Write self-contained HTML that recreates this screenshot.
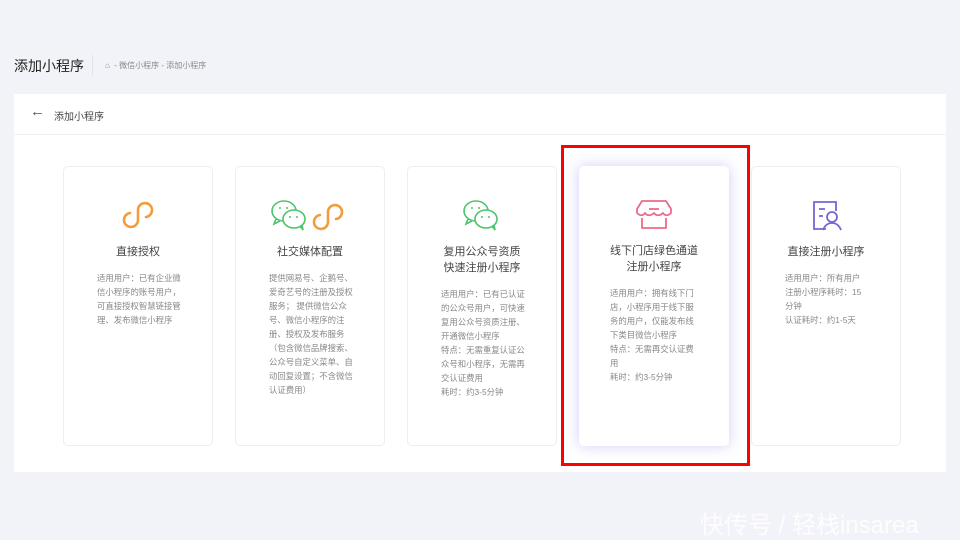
<!DOCTYPE html>
<html><head><meta charset="utf-8"><style>
*{margin:0;padding:0;box-sizing:border-box}
body{width:960px;height:540px;background:#f2f3f8;font-family:"Liberation Sans","Noto Sans CJK SC",sans-serif;position:relative;overflow:hidden;color:#333}
.t{position:absolute;left:14px;top:56px;font-size:14px;color:#222}
.sep{position:absolute;left:92px;top:55px;width:1px;height:20px;background:#e2e3e8}
.bc{position:absolute;left:105px;top:60px;font-size:8px;color:#888}
.panel{position:absolute;left:14px;top:94px;width:932px;height:378px;background:#fff}
.hd{height:41px;border-bottom:1px solid #f0f0f3;font-size:10px;color:#444;padding:14px 0 0 40px;position:relative}
.card{position:absolute;top:166px;width:150px;height:280px;background:#fff;border:1px solid #eeeef2;border-radius:5px}
.card .ic{position:absolute;top:32px;left:0;width:100%;text-align:center}
.card .tt{position:absolute;top:77px;left:0;width:100%;text-align:center;font-size:11px;line-height:16px;color:#444}
.card .ds{position:absolute;left:33px;white-space:nowrap;font-size:8.4px;line-height:14px;color:#888}
.sel{border:none;box-shadow:0 0 14px rgba(130,110,240,.35)}
.red{position:absolute;left:561px;top:145px;width:189px;height:321px;border:3px solid #f00}
.wm{position:absolute;left:700px;top:505px;font-size:24px;color:#fff;opacity:.9}
</style></head><body>
<div class="t">添加小程序</div><div class="sep"></div>
<div class="bc">⌂ &nbsp;- 微信小程序 - 添加小程序</div>
<div class="panel"><div class="hd"><span style="position:absolute;left:16px;top:9px;font-size:15px;color:#555">←</span>添加小程序</div></div>

<div class="card" style="left:63px"><div class="ic"><svg width="36" height="32" viewBox="0 0 36 32"><path d="M10 14a7 7 0 1 0 8 7V11a7 7 0 1 1 8 7" fill="none" stroke="#f39c3b" stroke-width="2.6" stroke-linecap="round"/></svg></div>
<div class="tt">直接授权</div>
<div class="ds" style="top:104px">适用用户：已有企业微<br>信小程序的账号用户，<br>可直接授权智慧链接管<br>理、发布微信小程序</div></div>

<div class="card" style="left:235px"><div class="ic"><svg width="100" height="34" viewBox="0 0 100 34"><g fill="none" stroke="#4cc46a" stroke-width="1.6"><ellipse cx="24" cy="12" rx="12" ry="10"/><path d="M16 20l-2 5 6-3"/><ellipse cx="34" cy="20" rx="11" ry="9" fill="#fff"/><path d="M40 27l3 4-1-5"/></g><g fill="#4cc46a"><circle cx="20" cy="9" r="1"/><circle cx="27" cy="9" r="1"/><circle cx="30" cy="18" r="1"/><circle cx="37" cy="18" r="1"/></g><path d="M60 16a7 7 0 1 0 8 7V13a7 7 0 1 1 8 7" fill="none" stroke="#f39c3b" stroke-width="2.6" stroke-linecap="round"/></svg></div>
<div class="tt">社交媒体配置</div>
<div class="ds" style="top:104px">提供网易号、企鹅号、<br>爱奇艺号的注册及授权<br>服务； 提供微信公众<br>号、微信小程序的注<br>册、授权及发布服务<br>（包含微信品牌搜索、<br>公众号自定义菜单、自<br>动回复设置；不含微信<br>认证费用）</div></div>

<div class="card" style="left:407px"><div class="ic"><svg width="50" height="34" viewBox="0 0 50 34"><g fill="none" stroke="#4cc46a" stroke-width="1.6"><ellipse cx="19" cy="12" rx="12" ry="10"/><path d="M11 20l-2 5 6-3"/><ellipse cx="29" cy="20" rx="11" ry="9" fill="#fff"/><path d="M35 27l3 4-1-5"/></g><g fill="#4cc46a"><circle cx="15" cy="9" r="1"/><circle cx="22" cy="9" r="1"/><circle cx="25" cy="18" r="1"/><circle cx="32" cy="18" r="1"/></g></svg></div>
<div class="tt">复用公众号资质<br>快速注册小程序</div>
<div class="ds" style="top:120px">适用用户：已有已认证<br>的公众号用户，可快速<br>复用公众号资质注册、<br>开通微信小程序<br>特点：无需重复认证公<br>众号和小程序，无需再<br>交认证费用<br>耗时：约3-5分钟</div></div>

<div class="card sel" style="left:579px"><div class="ic"><svg width="40" height="34" viewBox="0 0 40 34"><g fill="none" stroke="#ee6a8a" stroke-width="1.8" stroke-linejoin="round"><path d="M8 3h24l5 8v4c-3 3-6 3-8 0-3 3-7 3-9 0-3 3-7 3-9 0-2 3-5 3-8 0v-4z"/><path d="M8 20v10h24V20"/><path d="M15 11h10"/></g></svg></div>
<div class="tt">线下门店绿色通道<br>注册小程序</div>
<div class="ds" style="top:120px;left:31px">适用用户：拥有线下门<br>店，小程序用于线下服<br>务的用户，仅能发布线<br>下类目微信小程序<br>特点：无需再交认证费<br>用<br>耗时：约3-5分钟</div></div>

<div class="card" style="left:751px"><div class="ic"><svg width="40" height="34" viewBox="0 0 40 34"><g fill="none" stroke="#7b63d6" stroke-width="1.8"><path d="M20 30H8V3h22v9"/><path d="M13 10h6M13 17h4"/><circle cx="26" cy="18" r="5"/><path d="M17 31c2-5 5-7 9-7s7 2 9 7"/></g></svg></div>
<div class="tt">直接注册小程序</div>
<div class="ds" style="top:104px">适用用户：所有用户<br>注册小程序耗时：15<br>分钟<br>认证耗时：约1-5天</div></div>

<div class="red"></div>
<div class="wm">快传号 / 轻栈insarea</div>
</body></html>
